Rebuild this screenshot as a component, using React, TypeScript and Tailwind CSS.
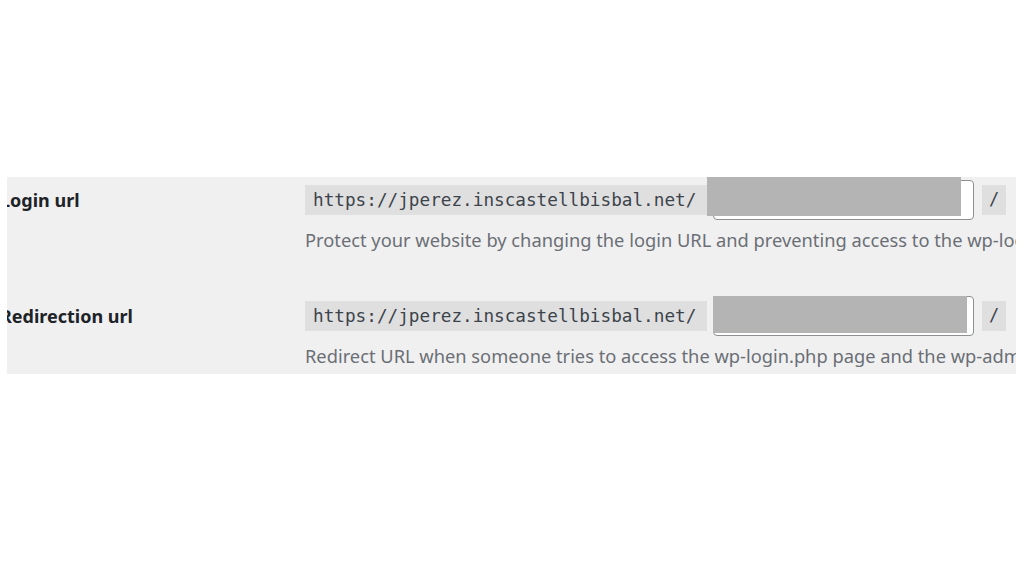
import React from 'react';

const sans = { fontFamily: '"Noto Sans", "Open Sans", sans-serif' };

interface UrlRowProps {
  label: string;
  description: string;
  maskClass: string;
}

const UrlRow: React.FC<UrlRowProps> = ({ label, description, maskClass }) => {
  return (
    <div className="grid grid-cols-[298px_1fr]">
      {/* Label */}
      <div className="h-[40px] flex items-center">
        <span className="ml-[-7px] text-[18px] font-bold text-[#1d2327] whitespace-nowrap font-['Noto_Sans','Open_Sans',sans-serif]">
          {label}
        </span>
      </div>

      {/* Field */}
      <div className="min-w-0">
        <div className="relative h-[40px] flex items-center">
          <code className="h-[30px] w-[402px] shrink-0 flex items-center pl-[8px] bg-[#dfdfe0] text-[#3c434a] text-[17.7px] font-['DejaVu_Sans_Mono','Liberation_Mono',monospace] whitespace-nowrap">
            https://jperez.inscastellbisbal.net/
          </code>
          <input
            type="text"
            className="ml-[6px] h-[40px] w-[261px] shrink-0 bg-white border border-[#8c8f94] rounded-[4px]"
          />
          <code className="ml-[8px] h-[30px] w-[24px] shrink-0 flex items-center justify-center bg-[#dfdfe0] text-[#3c434a] text-[17px] font-['DejaVu_Sans_Mono','Liberation_Mono',monospace]">
            /
          </code>

          {/* Redacted value */}
          <div className={`absolute bg-[#b4b4b4] ${maskClass}`}></div>
        </div>
        <p className="mt-[8px] h-[24px] leading-[24px] text-[18.3px] text-[#6b6f75] whitespace-nowrap" style={sans}>
          {description}
        </p>
      </div>
    </div>
  );
};

export default function App() {
  return (
    <div className="w-[1024px] h-[576px] bg-white pt-[177px] pl-[7px]" style={sans}>
      <div className="w-[1009px] overflow-hidden bg-[#f0f0f1] pt-[3px] pb-[6px]">
        <UrlRow
          label="Login url"
          description="Protect your website by changing the login URL and preventing access to the wp-login.php page and the wp-admin directory to non-connected people."
          maskClass="left-[402px] top-[-3px] w-[254px] h-[39px]"
        />
        <div className="mt-[44px]">
          <UrlRow
            label="Redirection url"
            description="Redirect URL when someone tries to access the wp-login.php page and the wp-admin directory while not logged in."
            maskClass="left-[408px] top-[0px] w-[254px] h-[37px]"
          />
        </div>
      </div>
    </div>
  );
}
